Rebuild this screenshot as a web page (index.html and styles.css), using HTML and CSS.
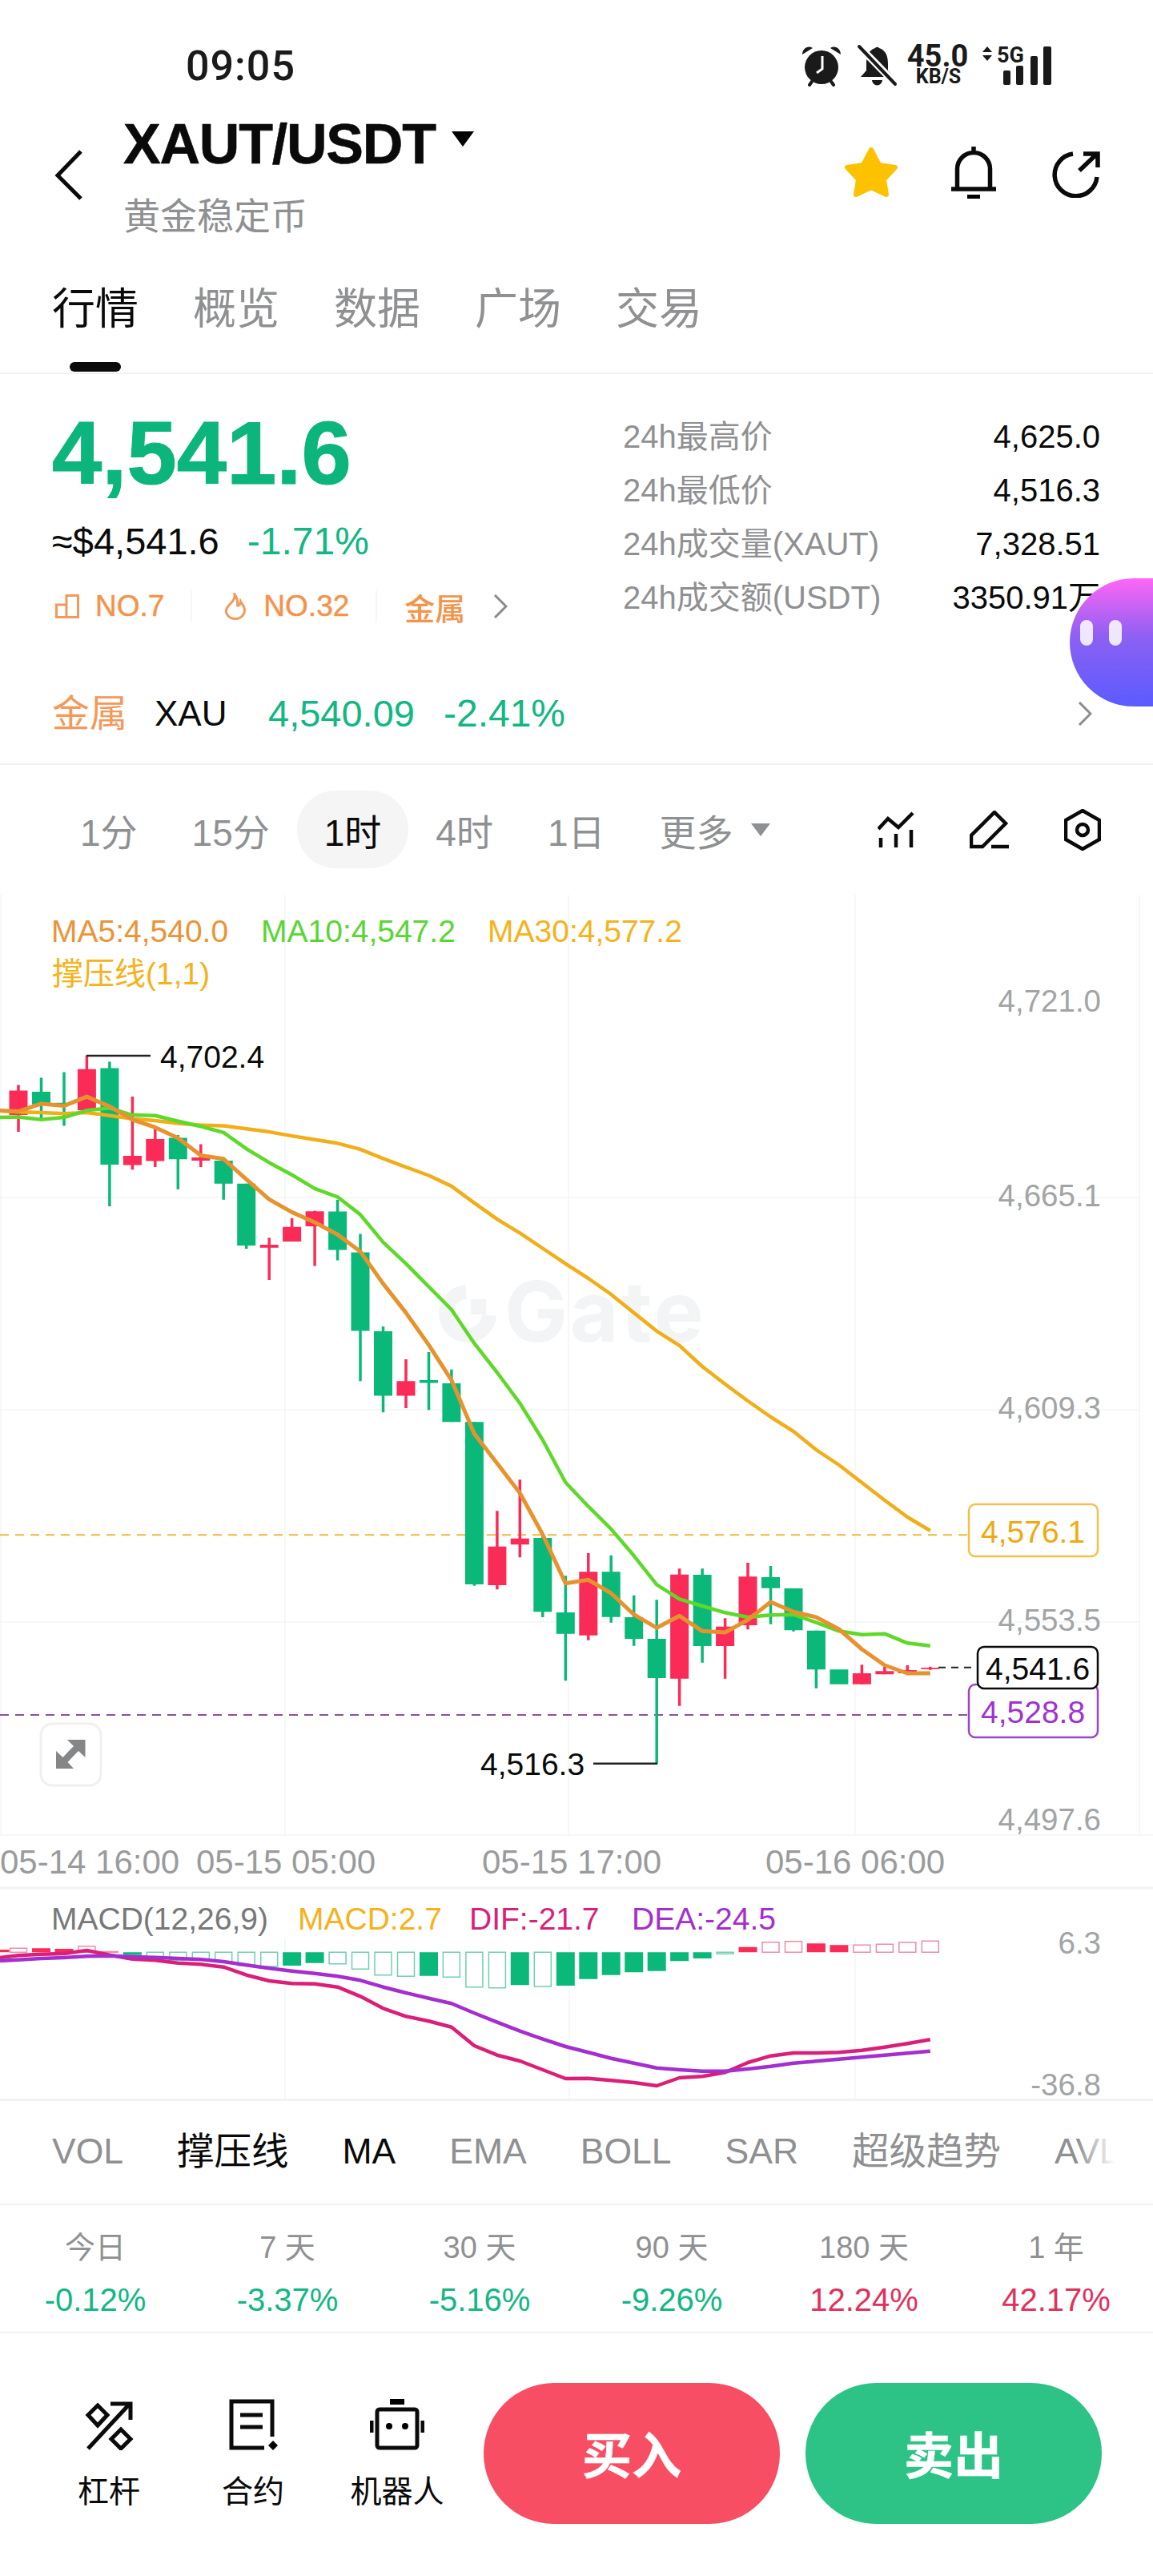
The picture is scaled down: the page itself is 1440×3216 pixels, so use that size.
FILE: index.html
```html
<!DOCTYPE html>
<html lang="zh-CN">
<head>
<meta charset="utf-8">
<title>XAUT/USDT</title>
<link rel="stylesheet" href="styles.css">
</head>
<body>
<div class="phone">
  <div class="status">
    <span class="clock">09:05</span>
    <svg class="status-icons" width="312" height="70" viewBox="0 -10 312 70">
      <g class="dark">
        <circle cx="24" cy="27" r="21"/>
        <path d="M0 11C0 4 7-1 13 3ZM48 11C48 4 41-1 35 3Z"/>
        <path class="dark-line" d="M14 42L9 49M34 42L39 49"/>
        <polyline class="white-line" points="25 13 25 29 18 34"/>
        <path d="M91 3a3 3 0 0 1 5 0C105 6 107 14 107 23V31L114 39H73L80 31V23C80 14 82 6 91 3ZM87 43H100A6.500 6.500 0 0 1 87 43Z"/>
        <path class="halo" d="M72 2L116 47"/>
        <path class="dark-line" d="M71 1L116 48"/>
        <path d="M231 1L237 8H225ZM231 19L225 12H237Z"/>
        <rect x="251" y="31" width="9" height="18" rx="2"/>
        <rect x="267" y="25" width="9" height="24" rx="2"/>
        <rect x="285" y="13" width="9" height="36" rx="2"/>
        <rect x="301" y="1" width="10" height="48" rx="2"/>
      </g>
      <text class="st-speed" x="169" y="26" text-anchor="middle">45.0</text>
      <text class="st-unit" x="170" y="47" text-anchor="middle">KB/S</text>
      <text class="st-net" x="243" y="21">5G</text>
    </svg>
  </div>

  <header class="header">
    <svg class="back" width="40" height="66" viewBox="0 0 40 66"><polyline points="33 3 4 33 33 62"/></svg>
    <div class="title-block">
      <div class="title"><span>XAUT/USDT</span><svg class="title-caret" width="28" height="19" viewBox="0 0 28 19"><path d="M0 0H28L14 19Z"/></svg></div>
      <div class="subtitle">黄金稳定币</div>
    </div>
    <div class="head-icons">
      <svg width="68" height="65" viewBox="0 0 68 65"><polygon class="star" points="34 4 44 23 64 26 50 41 53 60 34 51 15 60 18 41 4 26 24 23"/></svg>
      <svg width="56" height="65" viewBox="0 0 56 65"><path class="ln5" d="M28 0V6M7.500 53V28a20.500 20.500 0 0 1 41 0V53M0 53H56"/><rect x="20" y="60" width="16" height="5"/></svg>
      <svg class="share" width="60" height="58" viewBox="0 0 60 58"><path class="ln5" d="M26 3A26.500 26.500 0 1 0 56 32"/><path class="ln5" d="M34 24L55 4M39 3H57V20"/></svg>
    </div>
  </header>

  <nav class="tabs">
    <div class="tab active"><span>行情</span><i class="tab-mark"></i></div>
    <div class="tab">概览</div>
    <div class="tab">数据</div>
    <div class="tab">广场</div>
    <div class="tab">交易</div>
  </nav>

  <section class="market">
    <div class="market-left">
      <div class="price">4,541.6</div>
      <div class="price-sub"><span>≈$4,541.6</span><span class="up pct">-1.71%</span></div>
      <div class="tags">
        <svg class="tag-ico" width="30" height="30" viewBox="0 0 30 30"><path d="M1.500 28.500V13H14V28.500ZM14 13V1.500H28.500V28.500H14"/></svg>
        <span class="tag-text">NO.7</span>
        <i class="tag-sep"></i>
        <svg class="tag-ico flame" width="28" height="34" viewBox="0 0 28 34"><path d="M13 2C14 10 7 13 3.500 19C0 26 6 32.500 14 32.500C22 32.500 27 26 25 19C24 15 22 14 20.500 11C20 15 18 17 16.500 16C17 11 16 6 13 2Z"/></svg>
        <span class="tag-text">NO.32</span>
        <i class="tag-sep"></i>
        <span class="tag-text tag-cjk">金属</span>
        <svg class="chev" width="18" height="30" viewBox="0 0 18 30"><polyline points="2 1 16 15 2 29"/></svg>
      </div>
    </div>
    <dl class="stats">
      <div class="stat"><dt>24h最高价</dt><dd>4,625.0</dd></div>
      <div class="stat"><dt>24h最低价</dt><dd>4,516.3</dd></div>
      <div class="stat"><dt>24h成交量(XAUT)</dt><dd>7,328.51</dd></div>
      <div class="stat"><dt>24h成交额(USDT)</dt><dd>3350.91万</dd></div>
    </dl>
  </section>

  <section class="metal">
    <span class="metal-tag">金属</span>
    <span class="metal-name">XAU</span>
    <span class="up metal-val">4,540.09</span>
    <span class="up metal-val pct">-2.41%</span>
    <svg class="chev metal-chev" width="18" height="30" viewBox="0 0 18 30"><polyline points="2 1 16 15 2 29"/></svg>
  </section>

  <div class="frames">
    <span class="frame">1分</span>
    <span class="frame">15分</span>
    <span class="frame on">1时</span>
    <span class="frame">4时</span>
    <span class="frame">1日</span>
    <span class="frame more">更多<svg width="24" height="16" viewBox="0 0 24 16"><path d="M0 0H24L12 16Z"/></svg></span>
    <div class="tools">
      <svg width="46" height="46" viewBox="0 0 46 46"><path d="M1 22L13 9L26 20L44 2M4 33V45M23 28V45M42 23V45"/></svg>
      <svg width="50" height="48" viewBox="0 0 50 48"><path d="M31 2L45 16L16 45H2V31ZM27 45H49"/></svg>
      <svg width="46" height="52" viewBox="0 0 46 52"><path d="M23 2L44 14V38L23 50L2 38V14Z"/><circle cx="23" cy="26" r="7"/></svg>
    </div>
  </div>

  <svg class="chart" width="1440" height="1506" viewBox="0 1118 1440 1506">
    <path class="grid" d="M1 1118V2292M356 1118V2292M710 1118V2292M1068 1118V2292M1423 1118V2292M0 1496H1423M0 1761H1423M0 2026H1423M0 2292H1440"/>
    <path class="grid" d="M356 2420V2622M711 2420V2622M1068 2420V2622"/>
    <path class="rule" d="M0 2358H1440"/>

    <g class="wm">
      <path class="wm-ring" d="M582 1614A27 27 0 1 0 611 1643"/>
      <rect x="588" y="1623" width="19" height="19"/>
      <text class="wm-text" x="630" y="1676">Gate</text>
    </g>

    <path class="dash-y" d="M0 1917.300H1209"/>
    <path class="dash-p" d="M0 2142H1209"/>
    <path class="dash-k" d="M1172 2082.700H1222"/>

    <path class="wick red" d="M23 1355.600V1414.100M108.400 1318.500V1387.300M165.400 1370.100V1461.200M193.800 1408.400V1458.100M250.800 1429.400V1458.100M336.200 1546.200V1599M364.600 1521.700V1551.100M393.100 1512.500V1581.400M507 1698.100V1758.900M620.900 1887.300V1985.300M649.300 1848.300V1945.300M734.800 1940V2048.700M848.600 1959.300V2130.700M905.600 2021.300V2096.700M934 1952V2035.300M1076.400 2079.300V2103.700M1104.900 2080.700V2091.300M1133.300 2080V2091.700M1161.800 2081.700V2085.700"/>
    <path class="wick green" d="M51.500 1346.400V1396.900M80 1339.500V1406.500M136.900 1326.500V1507.100M222.300 1418V1485.700M279.200 1446.700V1498.700M307.700 1478.800V1559.900M421.600 1499.100V1574.500M450 1541.600V1725.300M478.500 1657.100V1764.300M535.500 1688.900V1761.200M563.900 1710.700V1776.200M592.400 1776.200V1980.700M677.800 1917.300V2020M706.300 1968.300V2099.300M763.200 1942.700V2026.700M791.700 1992.700V2055.700M820.200 1998.300V2202.700M877.100 1959.300V2076.700M962.500 1956V2028.700M991 1984V2037.700M1019.400 2036.700V2108.700"/>
    <path class="body red" d="M23 1362.500V1393M108.400 1335.700V1387.300M165.400 1444V1455.500M193.800 1422.900V1450.500M250.800 1445.900V1450.100M336.200 1555V1558.800M364.600 1532.800V1551.100M393.100 1513.200V1532M507 1725.300V1743.600M620.900 1931.700V1980M649.300 1921.700V1929.300M734.800 1963.300V2042.700M848.600 1966.700V2096.700M905.600 2031.700V2056M934 1969.300V2030M1076.400 2090V2103.700M1104.900 2087.300V2091.300M1133.300 2086V2090M1161.800 2083V2084.700"/>
    <path class="body green" d="M51.500 1364V1379.700M80 1377.800V1379.700M136.900 1334.500V1455.100M222.300 1421.400V1448.200M279.200 1450.100V1478.800M307.700 1478.800V1556.100M421.600 1513.600V1561.500M450 1564.500V1662.500M478.500 1662.900V1743.600M535.500 1724.100V1727.600M563.900 1727.900V1776.200M592.400 1776.200V1979M677.800 1921V2013.300M706.300 2014V2040.700M763.200 1963.300V2019.700M791.700 2020V2047M820.200 2047V2096M877.100 1967V2056M962.500 1970V1983.700M991 1984V2036.300M1019.400 2036.700V2085.300M1047.900 2085.300V2103.700"/>

    <polyline class="ma ma30" points="-5.500,1387.300 23,1389.300 51.500,1390 80,1391.200 108.400,1390 136.900,1393.800 165.400,1397.700 193.800,1400 222.300,1403.400 250.800,1405.700 279.200,1406.500 307.700,1410.300 336.200,1414.100 364.600,1419.100 393.100,1423.700 421.600,1428.300 450,1435.900 478.500,1447.400 507,1458.100 535.500,1468.500 563.900,1481.900 592.400,1502.900 620.900,1523.200 649.300,1540.400 677.800,1559.500 706.300,1578.700 734.800,1597 763.200,1617 791.700,1640 820.200,1662.800 848.600,1680.800 877.100,1707 905.600,1729 934,1750 962.500,1770 991,1788 1019.400,1811 1047.900,1830 1076.400,1852 1104.900,1874 1133.300,1895 1161.800,1912"/>
    <polyline class="ma ma10" points="-5.500,1396.100 23,1395.400 51.500,1398.800 80,1396.100 108.400,1387.300 136.900,1384.300 165.400,1393.100 193.800,1393.800 222.300,1400.700 250.800,1407.200 279.200,1414.900 307.700,1435.200 336.200,1452.400 364.600,1467.700 393.100,1484.900 421.600,1495.300 450,1517.400 478.500,1551.900 507,1578.700 535.500,1607.400 563.900,1636 592.400,1678.200 620.900,1714.500 649.300,1752.800 677.800,1798.700 706.300,1851.700 734.800,1881.700 763.200,1910 791.700,1943.300 820.200,1979.300 848.600,1997.300 877.100,2006 905.600,2014.300 934,2020 962.500,2017.300 991,2016.700 1019.400,2026.700 1047.900,2037.300 1076.400,2041.700 1104.900,2040.700 1133.300,2052.300 1161.800,2055.700"/>
    <polyline class="ma ma5" points="-5.500,1387.300 23,1388.500 51.500,1378.900 80,1381.600 108.400,1370.100 136.900,1382.400 165.400,1398.800 193.800,1408.400 222.300,1421.800 250.800,1443.600 279.200,1447.800 307.700,1473.400 336.200,1498.300 364.600,1514.400 393.100,1527 421.600,1542.300 450,1563.400 478.500,1603.600 507,1639.900 535.500,1680.100 563.900,1724.100 592.400,1791 620.900,1828 649.300,1865 677.800,1916.700 706.300,1977.700 734.800,1973.300 763.200,1990 791.700,2016.700 820.200,2033.300 848.600,2018.300 877.100,2037.300 905.600,2039 934,2023.300 962.500,2001 991,2013.300 1019.400,2020 1047.900,2035 1076.400,2060 1104.900,2080 1133.300,2090 1161.800,2090"/>

    <text class="lg c-ma5" x="64" y="1177">MA5:4,540.0</text>
    <text class="lg c-ma10" x="326" y="1177">MA10:4,547.2</text>
    <text class="lg c-ma30" x="609" y="1177">MA30:4,577.2</text>
    <text class="lg c-ma30" x="65" y="1230">撑压线(1,1)</text>

    <path class="leader" d="M108 1319H188M741 2202.700H821"/>
    <text class="lg c-ink" x="200" y="1334">4,702.4</text>
    <text class="lg c-ink" x="600" y="2217">4,516.3</text>

    <text class="ax" x="1375" y="1264" text-anchor="end">4,721.0</text>
    <text class="ax" x="1375" y="1507" text-anchor="end">4,665.1</text>
    <text class="ax" x="1375" y="1772" text-anchor="end">4,609.3</text>
    <text class="ax" x="1375" y="2037" text-anchor="end">4,553.5</text>
    <text class="ax" x="1375" y="2286" text-anchor="end">4,497.6</text>

    <rect class="box box-y" x="1210" y="1879" width="161" height="65" rx="8"/>
    <text class="lg c-box-y" x="1225" y="1926.700">4,576.1</text>
    <rect class="box box-p" x="1210" y="2104" width="161" height="66" rx="8"/>
    <text class="lg c-box-p" x="1225" y="2151.700">4,528.8</text>
    <rect class="box box-k" x="1221" y="2057" width="150" height="52" rx="8"/>
    <text class="lg c-ink" x="1231" y="2097.700">4,541.6</text>

    <rect class="expand" x="51" y="2153" width="75" height="77" rx="14"/>
    <path class="expand-ico" d="M106.500 2173V2195L98 2187L90 2195L84 2189L92 2181L84 2173ZM70 2209V2187L78.500 2195L86 2187L92 2193L84.500 2201L92 2209Z"/>

    <text class="tm" x="0" y="2340">05-14 16:00</text>
    <text class="tm" x="245" y="2340">05-15 05:00</text>
    <text class="tm" x="602" y="2340">05-15 17:00</text>
    <text class="tm" x="956" y="2340">05-16 06:00</text>

    <text class="lg c-gray" x="64" y="2410">MACD(12,26,9)</text>
    <text class="lg c-ma30" x="372" y="2410">MACD:2.7</text>
    <text class="lg c-dif" x="586" y="2410">DIF:-21.7</text>
    <text class="lg c-dea" x="789" y="2410">DEA:-24.5</text>
    <text class="ax" x="1375" y="2440" text-anchor="end">6.3</text>
    <text class="ax" x="1375" y="2617" text-anchor="end">-36.8</text>

    <path class="hist-s green" d="M165.400 2438.300V2441.700M364.600 2438.300V2455M393.100 2438.300V2451.700M535.500 2438.300V2467.700M649.300 2438.300V2479.300M706.300 2438.300V2480M734.800 2438.300V2471.700M763.200 2438.300V2466.700M791.700 2438.300V2463.300M820.200 2438.300V2461.700M848.600 2438.300V2449.300M877.100 2438.300V2446"/>
    <path class="hist-s red" d="M0 2435V2438.300M51.500 2433.300V2438.300M80 2434V2438.300M934 2431.700V2438.300M1019.400 2427.300V2438.300M1047.900 2429.300V2438.300"/>
    <path class="hist-h hg" d="M183.300 2438.300H204.300V2446.700H183.300ZM211.800 2438.300H232.800V2448.300H211.800ZM240.300 2438.300H261.300V2448.300H240.300ZM268.700 2438.300H289.700V2450H268.700ZM297.200 2438.300H318.200V2455H297.200ZM325.700 2438.300H346.700V2456H325.700ZM411.100 2438.300H432.100V2452.700H411.100ZM439.500 2438.300H460.500V2459.300H439.500ZM468 2438.300H489V2466.700H468ZM496.500 2438.300H517.500V2468.300H496.500ZM553.400 2438.300H574.400V2469.300H553.400ZM581.900 2438.300H602.900V2481.700H581.900ZM610.400 2438.300H631.400V2482.700H610.400ZM667.300 2438.300H688.300V2481H667.300ZM895.100 2438.300H916.100V2440.300H895.100Z"/>
    <path class="hist-h hr" d="M12.500 2433.300H33.500V2438.300H12.500ZM97.900 2430.700H118.900V2438.300H97.900ZM126.400 2437.600H147.400V2438.300H126.400ZM952 2425.700H973V2438.300H952ZM980.500 2424.700H1001.500V2438.300H980.500ZM1065.900 2429.300H1086.900V2438.300H1065.900ZM1094.400 2428.300H1115.400V2438.300H1094.400ZM1122.800 2426H1143.800V2438.300H1122.800ZM1151.300 2424.300H1172.300V2438.300H1151.300Z"/>

    <polyline class="ma dif" points="0,2445 23,2442.300 51.500,2440.700 80,2440 108.400,2436 136.900,2441.700 165.400,2446.700 193.800,2448.300 222.300,2451.700 250.800,2453.300 279.200,2456.700 307.700,2466.700 336.200,2474 364.600,2477.300 393.100,2477.700 421.600,2481.700 450,2493.300 478.500,2508.300 507,2518.300 535.500,2524.300 563.900,2531.700 592.400,2555 620.900,2566.700 649.300,2574 677.800,2585 706.300,2596 734.800,2595.700 763.200,2598.300 791.700,2601 820.200,2605 848.600,2595 877.100,2593.300 905.600,2588.300 934,2576 962.500,2567.700 991,2564 1019.400,2564 1047.900,2563.300 1076.400,2560.700 1104.900,2556.700 1133.300,2552.300 1161.800,2547.300"/>
    <polyline class="ma dea" points="0,2449 23,2447.700 51.500,2446 80,2445 108.400,2443.300 136.900,2442.700 165.400,2444 193.800,2444.700 222.300,2446 250.800,2447.300 279.200,2450 307.700,2454.300 336.200,2458.300 364.600,2461.700 393.100,2464.700 421.600,2468.300 450,2473.300 478.500,2481.700 507,2489 535.500,2495.700 563.900,2502.300 592.400,2514.300 620.900,2525.700 649.300,2536.700 677.800,2546.700 706.300,2556 734.800,2563.300 763.200,2570.700 791.700,2576.700 820.200,2582.700 848.600,2585 877.100,2586.700 905.600,2586.700 934,2584 962.500,2580.700 991,2576.700 1019.400,2574.300 1047.900,2571.700 1076.400,2569.300 1104.900,2566.700 1133.300,2564.300 1161.800,2561.700"/>
    <path class="rule" d="M0 2622.500H1440"/>
  </svg>

  <div class="inds">
    <span>VOL</span><span class="ink cjk">撑压线</span><span class="ink">MA</span><span>EMA</span><span>BOLL</span><span>SAR</span><span class="cjk">超级趋势</span><span>AVL</span>
  </div>

  <div class="periods">
    <div class="period"><span class="p-name">今日</span><span class="up">-0.12%</span></div>
    <div class="period"><span class="p-name">7 天</span><span class="up">-3.37%</span></div>
    <div class="period"><span class="p-name">30 天</span><span class="up">-5.16%</span></div>
    <div class="period"><span class="p-name">90 天</span><span class="up">-9.26%</span></div>
    <div class="period"><span class="p-name">180 天</span><span class="down">12.24%</span></div>
    <div class="period"><span class="p-name">1 年</span><span class="down">42.17%</span></div>
  </div>

  <footer class="actions">
    <div class="act">
      <svg width="61" height="64" viewBox="0 0 61 64"><g class="act-ln"><path d="M4 62L56 6M32 6H57V26"/><path d="M16 8L28 20L16 33L4 20ZM45 38L57 50L45 62L33 50Z"/></g></svg>
      <span>杠杆</span>
    </div>
    <div class="act">
      <svg width="61" height="64" viewBox="0 0 61 64"><g class="act-ln"><path d="M54 47V3H3V61H44M14 20H42M14 35H42"/></g><path d="M55 52L61 58L55 64L49 58Z"/></svg>
      <span>合约</span>
    </div>
    <div class="act">
      <svg width="68" height="64" viewBox="0 0 68 64"><g class="act-ln"><rect x="9" y="13" width="50" height="48" rx="3"/><path d="M2 27V42M66 27V42"/></g><rect x="25" y="0" width="18" height="7"/><circle cx="24" cy="34" r="4"/><circle cx="44" cy="34" r="4"/></svg>
      <span>机器人</span>
    </div>
    <div class="trade buy">买入</div>
    <div class="trade sell">卖出</div>
  </footer>

  <div class="bot"><i></i><i></i></div>
</div>
</body>
</html>
```

FILE: styles.css
```css
* { box-sizing: border-box; }
html, body { margin: 0; padding: 0; background: #fff; }
body, text {
  font-family: "Liberation Sans", "Noto Sans CJK SC", sans-serif;
}
.phone {
  position: relative;
  width: 1440px;
  height: 3216px;
  overflow: hidden;
  color: #0a0a0a;
  background: #fff;
}

/* status bar */
.status {
  display: flex;
  height: 125px;
  padding: 47px 0 0 232px;
}
.clock {
  width: 770px;
  margin-top: 11px;
  font-family: Roboto, "Liberation Sans", sans-serif;
  font-size: 52px;
  font-weight: 500;
  line-height: 50px;
  letter-spacing: 1px;
  color: #1a1a1a;
}
.status-icons { display: block; }
.dark { fill: #1a1a1a; }
.dark-line { fill: none; stroke: #1a1a1a; stroke-width: 4; stroke-linecap: round; }
.white-line { fill: none; stroke: #fff; stroke-width: 3; }
.halo { fill: none; stroke: #fff; stroke-width: 9; }
.st-speed { font-family: Roboto, sans-serif; font-size: 38px; font-weight: 700; fill: #1a1a1a; }
.st-unit { font-family: Roboto, sans-serif; font-size: 25px; font-weight: 700; fill: #1a1a1a; }
.st-net { font-family: Roboto, sans-serif; font-size: 27px; font-weight: 700; fill: #1a1a1a; }

/* header */
.header {
  display: flex;
  height: 215px;
  padding-left: 68px;
}
.back {
  flex: none;
  margin: 61px 0 0 0;
  fill: none;
  stroke: #0a0a0a;
  stroke-width: 5;
}
.title-block { flex: none; width: 1000px; margin-left: 46px; }
.title {
  display: flex;
  align-items: center;
  margin-top: 20px;
  font-size: 70px;
  font-weight: 700;
  line-height: 70px;
  letter-spacing: -1.2px;
  -webkit-text-stroke: 0.6px #0a0a0a;
}
.title-caret { margin: -14px 0 0 20px; }
.subtitle {
  margin-top: 25px;
  font-size: 46px;
  line-height: 60px;
  color: #8f9092;
}
.head-icons { display: flex; gap: 66px; margin: 58px 0 0 -100px; height: 66px; }
.share { margin: 6px 0 0 4px; }
.star { fill: #fcc200; stroke: #fcc200; stroke-width: 6; stroke-linejoin: round; }
.ln5 { fill: none; stroke: #0a0a0a; stroke-width: 5.500; }

/* tabs */
.tabs {
  display: flex;
  gap: 68px;
  height: 127px;
  padding: 19px 0 0 65px;
  border-bottom: 2px solid #f2f2f2;
  font-size: 54px;
  line-height: 54px;
  color: #8f9092;
}
.tab { display: flex; flex-direction: column; align-items: center; }
.tab.active { color: #0a0a0a; }
.tab-mark {
  display: block;
  width: 64px;
  height: 12px;
  margin-top: 39px;
  border-radius: 6px;
  background: #0a0a0a;
}

/* market */
.market {
  display: flex;
  height: 378px;
  padding-left: 65px;
}
.market-left { flex: none; width: 713px; padding-top: 39px; }
.price {
  font-size: 112px;
  font-weight: 700;
  line-height: 120px;
  color: #0cb57b;
  -webkit-text-stroke: 1.2px #0cb57b;
}
.price-sub {
  display: flex;
  gap: 35px;
  margin-top: 20px;
  font-size: 47px;
  line-height: 60px;
}
.up { color: #12b784; }
.down { color: #e0315c; }
.price-sub .pct, .metal .pct { font-size: 48px; }
.tags {
  display: flex;
  align-items: center;
  height: 50px;
  margin-top: 26px;
}
.tag-ico { flex: none; fill: none; stroke: #f3995a; stroke-width: 3; margin: 0 20px 0 4px; }
.tag-ico.flame { margin: 0 21px 0 40px; }
.tag-text {
  font-size: 37px;
  font-weight: 500;
  color: #f4934a;
  -webkit-text-stroke: 0.5px #f4934a;
}
.tag-sep { display: block; width: 2px; height: 40px; margin-left: 33px; background: #f6f6f6; }
.tag-cjk { margin-left: 34px; font-size: 38px; -webkit-text-stroke: 0; }
.chev { flex: none; fill: none; stroke: #8c8c8c; stroke-width: 3; margin-left: 35px; }
.stats { flex: none; width: 596px; margin: 0; padding-top: 45px; }
.stat {
  display: flex;
  justify-content: space-between;
  height: 67px;
  font-size: 40px;
  line-height: 67px;
}
.stat dt { color: #8f9092; }
.stat dd { margin: 0; }

/* metal strip */
.metal {
  display: flex;
  align-items: center;
  height: 110px;
  padding: 2px 76px 18px 65px;
  border-bottom: 2px solid #f2f2f2;
  line-height: 90px;
}
.metal-tag { width: 128px; font-size: 47px; color: #f3995a; }
.metal-name { width: 142px; font-size: 44px; }
.metal-val { margin-right: 36px; font-size: 47px; }
.metal-chev { margin-left: auto; margin-right: 0; }

/* timeframes */
.frames {
  display: flex;
  height: 162px;
  padding: 32px 65px 0 66px;
  font-size: 46px;
  color: #8f9092;
}
.frame {
  display: flex;
  align-items: center;
  gap: 22px;
  height: 97px;
  padding: 0 34px;
  border-radius: 48px;
}
.frame.on { background: #f5f5f5; color: #0a0a0a; }
.more svg { fill: #8f9092; }
.tools {
  display: flex;
  align-items: center;
  gap: 68.500px;
  height: 97px;
  margin-left: auto;
  fill: none;
  stroke: #0a0a0a;
  stroke-width: 4.500;
}

/* chart */
.chart { display: block; }
.grid { fill: none; stroke: #f4f5f6; stroke-width: 1.500; }
.rule { fill: none; stroke: #f2f2f2; stroke-width: 3; }
.wm { fill: #f2f4f5; }
.wm-ring { fill: none; stroke: #f2f4f5; stroke-width: 18; }
.wm-text { font-family: Inter, sans-serif; font-size: 105px; font-weight: 700; letter-spacing: 3px; }
.dash-y { fill: none; stroke: #f2b73c; stroke-width: 2; stroke-dasharray: 11 8; }
.dash-p { fill: none; stroke: #8d4fa0; stroke-width: 2; stroke-dasharray: 11 8; }
.dash-k { fill: none; stroke: #222; stroke-width: 2; stroke-dasharray: 9 7; }
.wick { fill: none; stroke-width: 3.500; }
.body { fill: none; stroke-width: 23; }
.hist-s { fill: none; stroke-width: 23; }
.red { stroke: #fb2b58; }
.green { stroke: #0ab97a; }
.ma { fill: none; stroke-linejoin: round; }
.ma5 { stroke: #e8922e; stroke-width: 5; }
.ma10 { stroke: #5ed929; stroke-width: 4.500; }
.ma30 { stroke: #f1ae18; stroke-width: 4.500; }
.dif { stroke: #db1f78; stroke-width: 4.500; }
.dea { stroke: #a52ecf; stroke-width: 4.500; }
.hist-h { fill: #fff; stroke-width: 1.500; }
.hg { stroke: #70cfae; }
.hr { stroke: #f08ba3; }
.lg { font-size: 39px; }
.ax { font-size: 38.500px; fill: #a2a4a6; }
.tm { font-size: 42px; fill: #9a9b9d; }
.c-ma5 { fill: #ea9436; }
.c-ma10 { fill: #58d633; }
.c-ma30 { fill: #f5b21a; }
.c-ink { fill: #0a0a0a; }
.c-gray { fill: #77787a; }
.c-dif { fill: #db1f78; }
.c-dea { fill: #a52ecf; }
.c-box-y { fill: #efa911; }
.c-box-p { fill: #a033d0; }
.leader { fill: none; stroke: #222; stroke-width: 2.500; }
.box { fill: #fff; stroke-width: 2.500; }
.box-y { stroke: #f3c14b; }
.box-p { stroke: #9d45c8; }
.box-k { stroke: #0a0a0a; }
.expand { fill: #fff; stroke: #f0f0f0; stroke-width: 3; }
.expand-ico { fill: #858687; }

/* indicator strip */
.inds {
  position: relative;
  display: flex;
  gap: 67px;
  width: 1393px;
  height: 128px;
  padding-left: 65px;
  overflow: hidden;
  font-size: 44.500px;
  line-height: 126px;
  color: #8f9092;
  white-space: nowrap;
}
.inds::after {
  content: "";
  position: absolute;
  top: 0;
  right: 0;
  width: 48px;
  height: 100%;
  background: linear-gradient(90deg, rgba(255, 255, 255, 0), #fff);
}
.inds .ink { color: #0a0a0a; }
.inds .cjk { font-size: 46.500px; }

/* change periods */
.periods {
  display: grid;
  grid-template-columns: repeat(6, 240px);
  height: 162px;
  margin-left: -1px;
  padding-top: 23px;
  border-top: 2px solid #f2f2f2;
  border-bottom: 2px solid #f2f2f2;
  font-size: 40px;
  line-height: 60px;
  text-align: center;
}
.period { display: flex; flex-direction: column; gap: 5px; }
.p-name { font-size: 38px; color: #8f9092; }

/* bottom actions */
.actions {
  display: flex;
  align-items: flex-start;
  padding: 62px 0 0 46px;
}
.act {
  display: flex;
  flex-direction: column;
  align-items: center;
  width: 180px;
  margin-top: 20px;
  font-size: 39px;
  line-height: 50px;
}
.act svg { display: block; margin-bottom: 27px; }
.act-ln { fill: none; stroke: #0a0a0a; stroke-width: 5; }
.trade {
  display: flex;
  align-items: center;
  justify-content: center;
  width: 370px;
  height: 176px;
  padding-bottom: 3px;
  border-radius: 88px;
  font-size: 62px;
  font-weight: 700;
  color: #fff;
  -webkit-text-stroke: 0.5px #fff;
}
.buy { margin-left: 18px; background: #f84e64; }
.sell { margin-left: 32px; background: #2dc386; }

/* floating assistant */
.bot {
  position: absolute;
  top: 722px;
  left: 1336px;
  display: flex;
  gap: 20px;
  width: 104px;
  height: 160px;
  padding: 52px 0 0 13px;
  border-radius: 80px 0 0 80px;
  background: linear-gradient(180deg, #ff66f6 0%, #8d60f3 45%, #5a5bff 100%);
}
.bot i {
  display: block;
  width: 16px;
  height: 32px;
  border-radius: 8px;
  background: rgba(255, 255, 255, 0.85);
}
```
